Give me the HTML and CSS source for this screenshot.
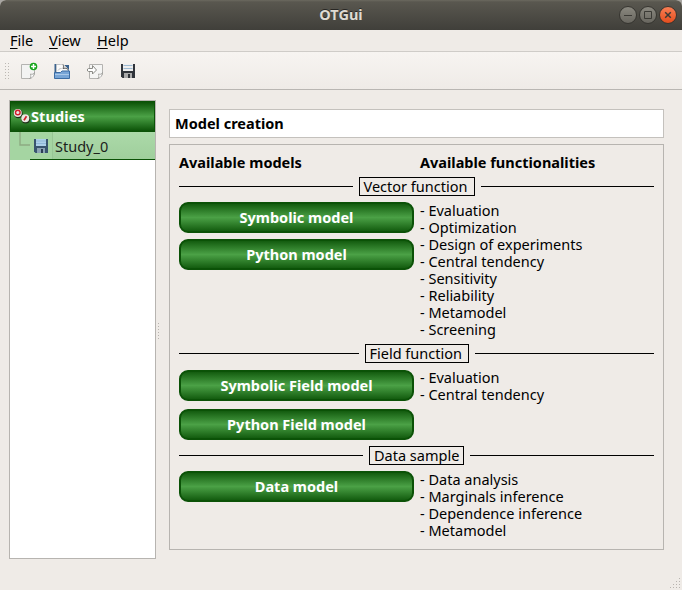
FILE: index.html
```html
<!DOCTYPE html>
<html lang="en">
<head>
<meta charset="utf-8">
<title>OTGui</title>
<link rel="stylesheet" href="styles.css">
</head>
<body>
<div class="window">
  <header class="titlebar">
    <div class="caption">OTGui</div>
    <svg class="controls" width="60" height="20" viewBox="0 0 60 20">
      <defs>
        <linearGradient id="grey" x2="0" y2="1"><stop stop-color="#8b8980"/><stop offset="1" stop-color="#67655e"/></linearGradient>
        <linearGradient id="orange" x2="0" y2="1"><stop stop-color="#f98056"/><stop offset="1" stop-color="#e34c1c"/></linearGradient>
      </defs>
      <g stroke="#35342f" stroke-width="1">
        <circle cx="10" cy="10" r="8.5" fill="url(#grey)"/>
        <circle cx="30" cy="10" r="8.5" fill="url(#grey)"/>
        <circle cx="50" cy="10" r="8.5" fill="url(#orange)"/>
      </g>
      <g stroke="#3b3a35" fill="none">
        <path d="M6 10.5h8M26.500 6.500h7v7h-7z"/>
        <path d="M47.200 7.200l5.600 5.600M52.800 7.200l-5.600 5.600" stroke-width="1.500"/>
      </g>
    </svg>
  </header>
  <nav class="menubar">
    <span class="m-file"><u>F</u>ile</span><span class="m-view"><u>V</u>iew</span><span class="m-help"><u>H</u>elp</span>
  </nav>
  <div class="toolbar">
    <svg class="handle" width="6" height="18" viewBox="0 0 6 18">
      <path d="M.5 1v16M3.500 1v16" stroke="#bcb8b3" stroke-dasharray="1 2"/>
    </svg>
    <svg width="18" height="18" viewBox="0 0 18 18">
      <path d="M1.500 2.500h13v10l-4 4h-9z" fill="#f3f3f2" stroke="#b4b3b0"/>
      <path d="M9.500 16.500c1.500-.5 1.500-2.500 1-4.500 1.500.5 3.500.5 4-1.500 0 3-2.500 6-5 6z" fill="#fff" stroke="#989894" stroke-width=".8"/>
      <circle cx="13.500" cy="4.500" r="3.800" fill="#16a51b"/>
      <path d="M13.500 2v5M11 4.500h5" stroke="#fff" stroke-width="1.500"/>
    </svg>
    <svg width="18" height="18" viewBox="0 0 18 18">
      <path d="M1.500 2h5l1 1H16v8H1.500z" fill="#3b628d"/>
      <path d="M3.500 2.500h7l4.500 4.500v4H3.500z" fill="#fafafa" stroke="#c8c8c8" stroke-width=".8"/>
      <path d="M10 2.500c.8 1.500.5 3 0 4 1.500-.4 3.500-.3 5 .8" fill="#ddd" stroke="#555"/>
      <path d="M5 8.500c1-1.500 2-2 3.500-2" fill="none" stroke="#bbb"/>
      <path d="M1.500 10.500h6l1.500-1.500h7.500v7.500h-15z" fill="#78a5d6" stroke="#3c6ca3"/>
      <path d="M2 12.500h14" stroke="#a9c8e9"/>
    </svg>
    <svg width="18" height="18" viewBox="0 0 18 18">
      <path d="M3.500 2.500h13v10l-4 4h-9z" fill="#f5f5f4" stroke="#b4b3b0"/>
      <path d="M11.500 16.500c1.500-.5 1.500-2.500 1-4.500 1.500.5 3.500.5 4-1.500 0 3-2.500 6-5 6z" fill="#fff" stroke="#989894" stroke-width=".8"/>
      <path d="M2.500 6.500h4v-3l4 4.500-4 4v-2.500h-4c-1.500 0-1.500-3 0-3z" fill="#fff" stroke="#8b8b86"/>
    </svg>
    <svg width="18" height="18" viewBox="0 0 18 18">
      <path d="M2 2h14v14H3.500L2 14.500z" fill="#30343a"/>
      <path d="M4 2h10v7H4z" fill="#eee"/><path d="M4.500 3.500h9M4.500 6.500h9" stroke="#9dbad2"/>
      <path d="M5 11h8v5H5z" fill="#aaa"/><path d="M9 12h2v4H9z" fill="#30343a"/>
    </svg>
  </div>
  <main class="content">
    <aside class="tree">
      <div class="tree-head">
        <svg width="18" height="18" viewBox="0 0 18 18">
          <g fill="#20301a"><circle cx="5.300" cy="5.700" r="4.500"/><circle cx="12.700" cy="11" r="4.500"/></g>
          <g fill="#e9e9e2"><circle cx="4.800" cy="5" r="4"/><circle cx="12.300" cy="10.300" r="4"/></g>
          <circle cx="4.800" cy="4.500" r="2.300" fill="none" stroke="#d31c2c" stroke-width="1.400"/>
          <path d="M11 12.200l2.500-4" stroke="#d31c2c" stroke-width="1.700"/>
        </svg>
        <b>Studies</b>
      </div>
      <div class="tree-row">
        <svg width="20" height="28" viewBox="0 0 20 28"><path d="M10 0v13h10" fill="none" stroke="#8dab82" stroke-width="1.400"/></svg>
        <div class="tree-item">
          <svg width="18" height="18" viewBox="0 0 18 18">
            <path d="M2 2h14v14H3.500L2 14.500z" fill="#38556f"/>
            <path d="M4 2h10v7H4z" fill="#acd0e8"/><path d="M4 4h10M4 6.500h10" stroke="#8fb8d8"/>
            <path d="M5 11h8v5H5z" fill="#8ba4b4"/><path d="M9 12h2v4H9z" fill="#2b3e53"/>
          </svg>
          <span class="tree-label">Study_0</span>
        </div>
      </div>
    </aside>
    <svg class="splitter" width="2" height="18" viewBox="0 0 2 18"><path d="M.5 1v16" stroke="#b8b4af" stroke-dasharray="1 2"/></svg>
    <section class="page">
      <h1>Model creation</h1>
      <div class="panel">
        <div class="heads"><b>Available models</b><b>Available functionalities</b></div>
        <div class="separator"><span class="label label-vector">Vector function</span></div>
        <div class="group group-vector">
          <div class="buttons"><button>Symbolic model</button><button>Python model</button></div>
          <ul><li>- Evaluation</li><li>- Optimization</li><li>- Design of experiments</li><li>- Central tendency</li><li>- Sensitivity</li><li>- Reliability</li><li>- Metamodel</li><li>- Screening</li></ul>
        </div>
        <div class="separator"><span class="label label-field">Field function</span></div>
        <div class="group group-field">
          <div class="buttons"><button>Symbolic Field model</button><button>Python Field model</button></div>
          <ul><li>- Evaluation</li><li>- Central tendency</li></ul>
        </div>
        <div class="separator"><span class="label label-data">Data sample</span></div>
        <div class="group group-data">
          <div class="buttons"><button>Data model</button></div>
          <ul><li>- Data analysis</li><li>- Marginals inference</li><li>- Dependence inference</li><li>- Metamodel</li></ul>
        </div>
      </div>
    </section>
  </main>
  <svg class="grip" width="12" height="12" viewBox="0 0 12 12">
    <path d="M9 1.500h1M6 4.500h1M9 4.500h1M3 7.500h1M6 7.500h1M9 7.500h1M0 10.500h1M3 10.500h1M6 10.500h1M9 10.500h1" stroke="#b8b4af"/>
  </svg>
</div>
</body>
</html>
```
FILE: styles.css
```css
* { box-sizing: border-box; }
body { margin: 0; font: 14.5px/17px "Noto Sans", sans-serif; color: #000; background: #a8a6a2; }
svg { display: block; flex: none; }
.window { position: relative; width: 682px; height: 590px; background: #efebe7; border-radius: 6px 6px 0 0; overflow: hidden; }
.titlebar { height: 30px; display: grid; grid-template-columns: 1fr 60px 1fr; background: linear-gradient(#6b695f 0, #59574f 2px, #403f3a 30px); }
.caption { grid-column: 1 / 4; grid-row: 1; text-align: center; font-weight: 700; font-size: 14.5px; line-height: 28px; color: #dfdbd2; text-shadow: 0 -1px #282724; }
.controls { grid-column: 1 / 4; grid-row: 1; justify-self: end; margin: 5px 4px 0 0; }
.menubar { height: 22px; padding: 2px 0 0 10px; display: flex; border-bottom: 1px solid #cfccc8; white-space: nowrap; }
.menubar u { text-decoration-thickness: 1px; text-underline-offset: 2px; }
.m-file { width: 39px; }
.m-view { width: 48px; }
.toolbar { height: 38px; padding: 10px 0 0 5px; display: flex; gap: 15px; background: linear-gradient(#f7f4f1, #efebe7); border-bottom: 1px solid #b9b6b2; }
.handle { margin-right: -6px; }
.content { display: flex; padding: 10px 18px 0 9px; }
.tree { width: 147px; height: 459px; border: 1px solid #b7b4b0; background: #fff; }
.tree-head { height: 31px; padding: 6px 0 0 2px; display: flex; border: 1px solid #0b5207; background: linear-gradient(#0b5207, #4ba146 50%, #0b5207); color: #fff; }
.tree-head b { line-height: 16px; letter-spacing: 0.1px; }
.tree-row { height: 28px; display: flex; background: #a5d5a2; }
.tree-item { width: 125px; height: 28px; display: flex; align-items: center; border-bottom: 1px solid #0b5207; padding-left: 2px; }
.tree-label { flex: 1; align-self: stretch; line-height: 28px; margin-left: 2px; padding-left: 2px; color: #1c221c; border-left: 1px solid #98c695; background: linear-gradient(#acd9a9, #9fcf9c); }
.splitter { margin: 222px 9px 0 2px; }
.page { width: 495px; padding-top: 9px; }
h1 { height: 29px; margin: 0 0 6px; padding-left: 5px; border: 1px solid #c4c1bd; background: #fff; font: 700 14.5px/26px "Noto Sans", sans-serif; }
.panel { height: 406px; border: 1px solid #b7b4b0; padding: 9px; }
.heads { height: 23px; display: flex; }
.heads b:first-child { width: 241px; }
.separator { height: 19px; display: flex; align-items: center; gap: 6px; white-space: nowrap; }
.separator::before, .separator::after { content: ""; flex: 1; height: 1px; background: #000; }
.label { height: 19px; border: 1px solid #000; padding-left: 4px; line-height: 16px; }
.label-vector { width: 116px; }
.label-field { width: 104px; }
.label-data { width: 95px; }
.group { display: flex; gap: 6px; padding-top: 6px; }
.group-vector { height: 148px; }
.group-field { height: 83px; padding-top: 7px; }
.buttons { width: 235px; display: flex; flex-direction: column; gap: 6px; }
.group-field .buttons { gap: 8px; }
button { flex: none; height: 31px; margin: 0; padding: 0 0 1px; border: 2px solid #0b5207; border-radius: 9px; background: linear-gradient(#0b5207, #4ba146 50%, #0b5207) border-box; font: 700 14.5px/24px "Noto Sans", sans-serif; color: #fff; }
ul { list-style: none; margin: 0; padding: 0; white-space: nowrap; }
.group-field ul { margin-top: -1px; }
.grip { position: absolute; right: 0; bottom: 1px; }
```
